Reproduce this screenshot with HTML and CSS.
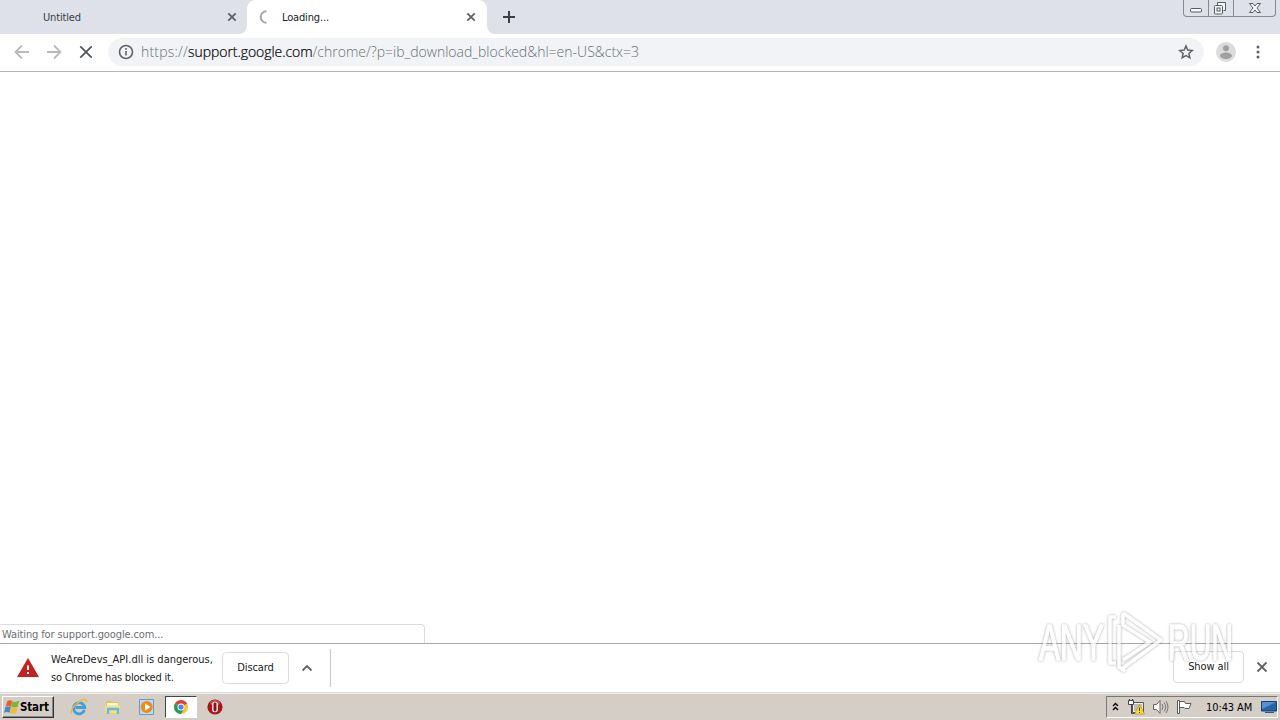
FILE: index.html
```html
<!DOCTYPE html>
<html lang="en">
<head>
<meta charset="utf-8">
<title>Loading...</title>
<link rel="stylesheet" href="styles.css">
</head>
<body>
<div class="screen">
  <header class="tabstrip">
    <div class="tab tab-idle"><span class="tab-title untitled">Untitled</span>
      <svg class="close" width="10" height="10" viewBox="0 0 10 10"><path d="M1.3 1.3l7.4 7.4M8.7 1.3L1.3 8.7"/></svg></div>
    <div class="tab tab-active">
      <svg class="spinner" width="14" height="14" viewBox="0 0 14 14"><path d="M9.500 1.2A5.800 5.800 0 0 0 9.500 12.8"/></svg>
      <span class="tab-title loading">Loading...</span>
      <svg class="close" width="10" height="10" viewBox="0 0 10 10"><path d="M1.3 1.3l7.4 7.4M8.7 1.3L1.3 8.7"/></svg></div>
    <svg class="newtab" width="14" height="14" viewBox="0 0 14 14"><path d="M7 1v12M1 7h12"/></svg>
    <div class="winbtns">
      <span class="wb wb-min"><svg width="25" height="17" viewBox="0 0 25 17"><rect x="6.500" y="8.500" width="11" height="3.500" rx="1"/></svg></span>
      <span class="wb wb-max"><svg width="24" height="17" viewBox="0 0 24 17"><path d="M8.500 5V2.500h8v8h-2"/><rect x="5.500" y="5.500" width="8" height="8.500" rx="1"/><rect x="8" y="8" width="3" height="3"/></svg></span>
      <span class="wb wb-close"><svg width="41" height="17" viewBox="0 0 41 17"><path d="M15.500 3.500h3.500l2 2.500 2-2.500h3.500l-3.500 4.500 3.500 4.500h-3.500l-2-2.500-2 2.500h-3.500l3.500-4.500z"/></svg></span>
    </div>
  </header>
  <nav class="toolbar">
    <svg class="nav back" width="16" height="16" viewBox="0 0 16 16"><path d="M15 8H2M8 1.500L1.500 8 8 14.500"/></svg>
    <svg class="nav fwd" width="16" height="16" viewBox="0 0 16 16"><path d="M1 8h13M8 1.500L14.500 8 8 14.500"/></svg>
    <svg class="nav stop" width="16" height="16" viewBox="0 0 16 16"><path d="M2.300 2.300l11.400 11.400M13.700 2.300L2.300 13.700"/></svg>
    <div class="omnibox">
      <svg class="info" width="16" height="16" viewBox="0 0 16 16"><circle cx="8" cy="8" r="6.500"/><path d="M8 7v4.500M8 4v1.700"/></svg>
      <span class="url"><span class="u1">https://</span><span class="host">support.google.com</span><span class="u3">/chrome/?p=ib_download_blocked&amp;hl=en-US&amp;ctx=3</span></span>
      <svg class="star" width="16" height="16" viewBox="0 0 16 16"><path d="M8 2l1.750 4.100 4.450.4-3.350 2.950 1 4.350L8 11.500l-3.850 2.300 1-4.350L1.800 6.500l4.450-.4z"/></svg>
    </div>
    <svg class="avatar" width="20" height="20" viewBox="0 0 20 20"><circle cx="10" cy="10" r="10" fill="#dcdcdc"/><circle cx="10" cy="6.300" r="3" fill="#a0a0a0"/><ellipse cx="10" cy="13.700" rx="6" ry="3.200" fill="#a0a0a0"/></svg>
    <svg class="dots" width="4" height="14" viewBox="0 0 4 14"><circle cx="2" cy="2" r="1.500"/><circle cx="2" cy="7" r="1.500"/><circle cx="2" cy="12" r="1.500"/></svg>
  </nav>
  <main class="content"><div class="status"><span class="t-status">Waiting for support.google.com...</span></div></main>
  <section class="shelf">
    <svg class="warning" width="22" height="20" viewBox="0 0 22 20"><path fill="#c5221f" d="M11 0l11 19H0z"/><path stroke="#fff" stroke-width="2" d="M11 7.500v4.500M11 14v2"/></svg>
    <div class="message"><span class="m1">WeAreDevs_API.dll is dangerous,</span><br><span class="m2">so Chrome has blocked it.</span></div>
    <button class="btn discard"><span>Discard</span></button>
    <svg class="chevron" width="12" height="8" viewBox="0 0 12 8"><path d="M1.500 6.500L6 2l4.500 4.500"/></svg>
    <i class="divider"></i>
    <button class="btn showall"><span>Show all</span></button>
    <svg class="shelf-close" width="12" height="12" viewBox="0 0 12 12"><path d="M1.500 1.500l9 9M10.500 1.500l-9 9"/></svg>
  </section>
  <footer class="taskbar">
    <div class="start">
      <svg width="16" height="16" viewBox="0 0 16 16"><path fill="#e8622a" d="M3 2.500Q5.500.5 8.300 2L7 7.800Q4.500 6.300 1.500 8z"/><path fill="#79b63b" d="M8.600 2.300q3 1.500 6.600-.8L13.700 7.700Q10.800 9 7.300 7.800z"/><path fill="#3b8ed3" d="M1.300 8.300Q4.200 6.600 6.900 8.100L5.600 13.800Q3 12.200 0 14z"/><path fill="#f4bd31" d="M7.300 8.200q3 1.500 6.300-.2L12.200 14q-3 1.500-6.200-.1z"/></svg>
      <b>Start</b>
    </div>
    <svg class="task ie" width="18" height="18" viewBox="0 0 18 18"><path d="M14.500 12A5.600 5.600 0 1 1 14.700 9.500H5.500" fill="none" stroke="#3fa0dd" stroke-width="2.800"/><path d="M2 15.500C-1 13 5 5.500 12 2q5-2 4.500 2" fill="none" stroke="#edba36" stroke-width="1.400"/></svg>
    <svg class="task folder" width="18" height="18" viewBox="0 0 18 18"><path d="M2 3h5l1 1h7v12H2z" fill="#e5c25c"/><path d="M3 5h11v3H3z" fill="#fff8d9"/><path d="M1 7.500h15v8H1z" fill="#f5df8d"/><path d="M4 16v-5h10v5" fill="none" stroke="#68b9df" stroke-width="2.500"/></svg>
    <svg class="task player" width="18" height="18" viewBox="0 0 18 18"><path d="M1.500 1.500h14v15h-14z" fill="#b9dcf5" stroke="#629bd0"/><circle cx="8.700" cy="9" r="6" fill="#f18a17"/><path d="M7 5.500L12.500 9 7 12.500z" fill="#fff"/></svg>
    <div class="chrome-task"><svg width="14" height="14" viewBox="0 0 14 14"><circle cx="7" cy="7" r="7" fill="#f5c431"/><path d="M7 7L.95 3.500A7 7 0 0 1 13.050 3.500z" fill="#dc4437"/><path d="M7 7L.95 3.500A7 7 0 0 0 7 14l3-5.300z" fill="#269b59"/><circle cx="7" cy="7" r="3.500" fill="#fff"/><circle cx="7" cy="7" r="2.600" fill="#4385f5"/></svg></div>
    <svg class="opera" width="16" height="16" viewBox="0 0 16 16"><circle cx="8" cy="8" r="7.600" fill="#a8151c"/><ellipse cx="8" cy="4" rx="5" ry="3" fill="#c94a4d"/><rect x="5.200" y="2.700" width="5.600" height="10.600" rx="2.500" fill="#fff"/><rect x="6.500" y="3.500" width="3" height="9" rx="1.400" fill="#8f1018"/></svg>
    <div class="tray">
      <svg class="up" width="7" height="9" viewBox="0 0 7 9"><path d="M1 4l2.500-2.500L6 4M1 8l2.500-2.500L6 8"/></svg>
      <svg class="net" width="17" height="16" viewBox="0 0 17 16"><path d="M4.500 3.500h11v10h-11z" fill="#eee" stroke="#555"/><path d="M6 5h8v7H6z" fill="#bdbdb8"/><path d="M.5 1.500h5v4h-5z" fill="#fff" stroke="#444"/><path d="M1.500 0v2M4.500 0v2M3.500 6v8.500H8" fill="none" stroke="#444"/><path d="M11.500 5.500l5 9.500h-10z" fill="#ffdc27" stroke="#b79210" stroke-width=".7"/><path d="M11.500 8.500v3.500m0 1v1" stroke="#333"/></svg>
      <svg class="sound" width="17" height="16" viewBox="0 0 17 16"><path d="M1.500 5.500h3L8 1.500v13l-3.500-4h-3z" fill="#fff" stroke="#666"/><path d="M10 5q2 3 0 6M12 3.500q3.500 4.500 0 9M14 2q4 6 0 12" fill="none" stroke="#777"/></svg>
      <svg class="flag" width="17" height="16" viewBox="0 0 17 16"><path d="M1.500 1.500h2v13h-2zM3.500 2.500h5l1 2h5.500l-2 5H9l-1-1H3.500z" fill="#fff" stroke="#5c5c5c"/></svg>
      <span class="clock">10:43 AM</span>
      <svg class="monitor" width="16" height="14" viewBox="0 0 16 14"><path d="M.5 1.500h15v9.500H.5z" fill="#2465aa" stroke="#153f78"/><path d="M1 2h14L1 9z" fill="#5791cc"/><path d="M4 12.500h9" stroke="#315884"/></svg>
    </div>
  </footer>
  <svg class="watermark" width="204" height="70" viewBox="0 0 204 70">
    <text x="4" y="53" textLength="65" lengthAdjust="spacingAndGlyphs">ANY</text>
    <text x="133" y="53" textLength="65" lengthAdjust="spacingAndGlyphs">RUN</text>
    <path d="M81 10h-6v46h6M84 18v42l6 4M88 6l38 27-38 28M88 6v12l27 17-27 18"/>
  </svg>
</div>
</body>
</html>
```
FILE: styles.css
```css
* { box-sizing: border-box; }
body { margin: 0; overflow: hidden; }
svg { display: block; flex: none; }
.screen { position: relative; width: 1280px; height: 720px; display: flex; flex-direction: column; background: #fff; color: #202124; font: 11px "DejaVu Sans Condensed", "DejaVu Sans", sans-serif; font-stretch: condensed; white-space: nowrap; }
.tabstrip { height: 34px; flex: none; display: flex; background: #fff; }
.tab { display: flex; align-items: center; flex: none; }
.tab-idle { width: 247px; padding: 0 10px 0 43px; justify-content: space-between; background: #dee1e9; border-bottom-right-radius: 8px; color: #3c4043; }
.tab-active { width: 240px; padding: 0 11px 0 10px; background: radial-gradient(circle at 8px 8px, #fff 7.5px, #dee1e9 8px) 0 0 / 8px 8px no-repeat, radial-gradient(circle at 0 8px, #fff 7.5px, #dee1e9 8px) 232px 0 / 8px 8px no-repeat, #fff; }
.untitled { letter-spacing: -.15px; }
.loading { letter-spacing: -.15px; }
.close, .shelf-close { fill: none; stroke: #5f6368; stroke-width: 1.8; }
.tab-active .close { margin-left: auto; }
.spinner { fill: none; stroke: #a5a7aa; stroke-width: 2; margin-right: 11px; }
.newtab { box-sizing: content-box; fill: none; stroke: #3c4043; stroke-width: 2; padding: 10px 680px 10px 15px; background: #dee1e9; border-bottom-left-radius: 8px; height: 14px; width: 14px; }
.winbtns { flex: 1; background: #dee1e9; display: flex; padding-right: 3px; margin-left: -13px; }
.wb { height: 17px; border: 1px solid #858990; border-top: 0; }
.wb svg { fill: #f7f8fa; stroke: #555b66; stroke-width: 1; }
.wb-min { width: 26px; border-bottom-left-radius: 4px; }
.wb-max { width: 25px; border-left: 0; }
.wb-close { width: 42px; border-left: 0; border-bottom-right-radius: 4px; }
.toolbar { height: 38px; flex: none; border-bottom: 1px solid #b5b5b5; display: flex; align-items: center; padding: 0 20px 2px 14px; }
.toolbar .nav { fill: none; stroke: #b8babd; stroke-width: 1.8; margin-right: 16px; }
.toolbar .stop { stroke: #53575b; margin-right: 14px; }
.omnibox { width: 1096px; height: 28px; border-radius: 14px; background: #f1f3f6; display: flex; align-items: center; padding: 0 10px; }
.info { fill: none; stroke: #5f6368; stroke-width: 1.6; margin-right: 7px; }
.url { display: flex; color: #6b7075; font: 300 14px/20px "Open Sans", sans-serif; }
.u1 { letter-spacing: .2px; }
.host { color: #000; -webkit-text-stroke: .2px #000; letter-spacing: -.05px; }
.star { margin-left: auto; fill: none; stroke: #5f6368; stroke-width: 1.5; }
.avatar { margin-left: 12px; }
.dots { margin-left: auto; fill: #5f6368; }
.content { flex: 1; display: flex; align-items: flex-end; }
.status { width: 425px; height: 19px; border: solid #dadce0; border-width: 1px 1px 0 0; border-top-right-radius: 4px; padding: 2px; color: #6c7074; line-height: 16px; }
.t-status { letter-spacing: -.12px; }
.shelf { height: 50px; flex: none; border-top: 1px solid #a9a9a9; border-bottom: 1px solid #ddd; display: flex; align-items: center; padding: 0 12px 1px 17px; }
.message { width: 171px; margin-left: 12px; padding-top: 2px; line-height: 18px; }
.m2 { letter-spacing: -.22px; }
.btn { height: 32px; border: 1px solid #dadce0; border-radius: 4px; background: transparent; color: #202124; font: inherit; padding: 0; letter-spacing: -.1px; }
.discard { width: 67px; }
.chevron { fill: none; stroke: #5f6368; stroke-width: 1.8; margin-left: 12px; }
.divider { width: 1px; height: 38px; background: #c8c8c8; margin-left: 17px; }
.showall { width: 71px; margin: 0 0 2px auto; }
.shelf-close { margin: 0 0 1px 12px; }
.taskbar { height: 27px; flex: none; background: #d5cec6; border-top: 1px solid #eee; display: flex; align-items: center; padding: 0 2px; color: #000; }
.start { width: 52px; height: 22px; border: 1px solid; border-color: #fff #333 #333 #fff; box-shadow: inset -1px -1px #888; display: flex; align-items: center; padding-left: 1px; }
.start b { font-size: 11.5px; letter-spacing: -.15px; }
.task { margin-left: 16px; }
.chrome-task { width: 32px; height: 22px; background: #fff; border: 1px solid; border-color: #444 #fff #fff #444; margin-left: 9px; display: flex; align-items: center; justify-content: center; }
.opera { margin-left: 10px; }
.tray { width: 172px; height: 22px; border: 1px solid; border-color: #777 #fff #fff #777; margin-left: auto; display: flex; align-items: center; }
.up { fill: none; stroke: #000; stroke-width: 1.4; margin: 0 9px 2px 5px; }
.sound { margin-left: 7px; }
.flag { margin-left: 7px; }
.clock { margin-left: 13px; letter-spacing: -.1px; }
.monitor { margin-left: auto; }
.watermark { position: absolute; left: 1035px; top: 607px; opacity: .7; fill: none; stroke: #fff; stroke-width: 3.5; stroke-linejoin: round; filter: drop-shadow(0 0 1.5px rgba(0,0,0,.35)) drop-shadow(0 0 1px rgba(0,0,0,.12)); }
.watermark text { font: 50px "Liberation Sans", sans-serif; fill: #fff; stroke-width: 1.3; }
```
